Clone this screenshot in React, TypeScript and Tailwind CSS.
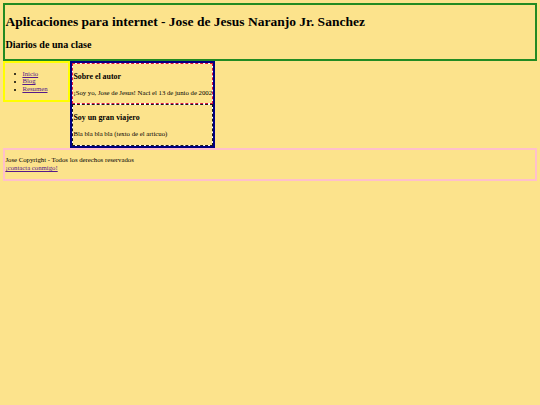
const links = ["Inicio", "Blog", "Resumen"];

export default function App() {
  return (
    <div className="min-h-screen bg-[#fce38c] p-[3.4px] font-['Liberation_Serif','Times_New_Roman',serif] text-black">
      <header className="border-2 border-[#228b22]">
        <h1 className="mt-[9px] mb-[9px] text-[13.5px] font-bold leading-[15.5px]">
          Aplicaciones para internet - Jose de Jesus Naranjo Jr. Sanchez
        </h1>
        <h2 className="mb-[8.4px] text-[10.1px] font-bold leading-[11.6px]">
          Diarios de una clase
        </h2>
      </header>
      <div className="flex items-start">
        <nav className="w-[67px] border-2 border-[#ffff00]">
          <ul className="my-[6.75px] list-none pl-[17px] text-[6.75px] leading-[7.75px]">
            {links.map((l) => (
              <li key={l}>
                <span className="-ml-[8px] mr-[6px] inline-block h-[2px] w-[2px] rounded-full bg-black align-middle" />
                <a href="#" className="text-[#551a8b] underline">
                  {l}
                </a>
              </li>
            ))}
          </ul>
        </nav>
        <main className="border-2 border-[#000080] bg-white">
          <article className="border border-dashed border-[#dc143c] bg-[#fce38c] bg-clip-padding">
            <h3 className="my-[7.9px] text-[7.9px] font-bold leading-[9.1px]">Sobre el autor</h3>
            <p className="my-[6.75px] text-[6.75px] leading-[7.75px]">
              ¡Soy yo, Jose de Jesus! Naci el 13 de junio de 2002
            </p>
          </article>
          <article className="border border-dashed border-[#1a1a1a] bg-[#fce38c] bg-clip-padding">
            <h3 className="my-[7.9px] text-[7.9px] font-bold leading-[9.1px]">Soy un gran viajero</h3>
            <p className="my-[6.75px] text-[6.75px] leading-[7.75px]">
              Bla bla bla bla (texto de el articuo)
            </p>
          </article>
        </main>
      </div>
      <footer className="border-2 border-[#ffc0cb]">
        <p className="my-[6.75px] text-[6.75px] leading-[7.75px]">
          Jose Copyright - Todos los derechos reservados
          <br />
          <a href="#" className="text-[#551a8b] underline">
            ¡contacta conmigo!
          </a>
        </p>
      </footer>
    </div>
  );
}
